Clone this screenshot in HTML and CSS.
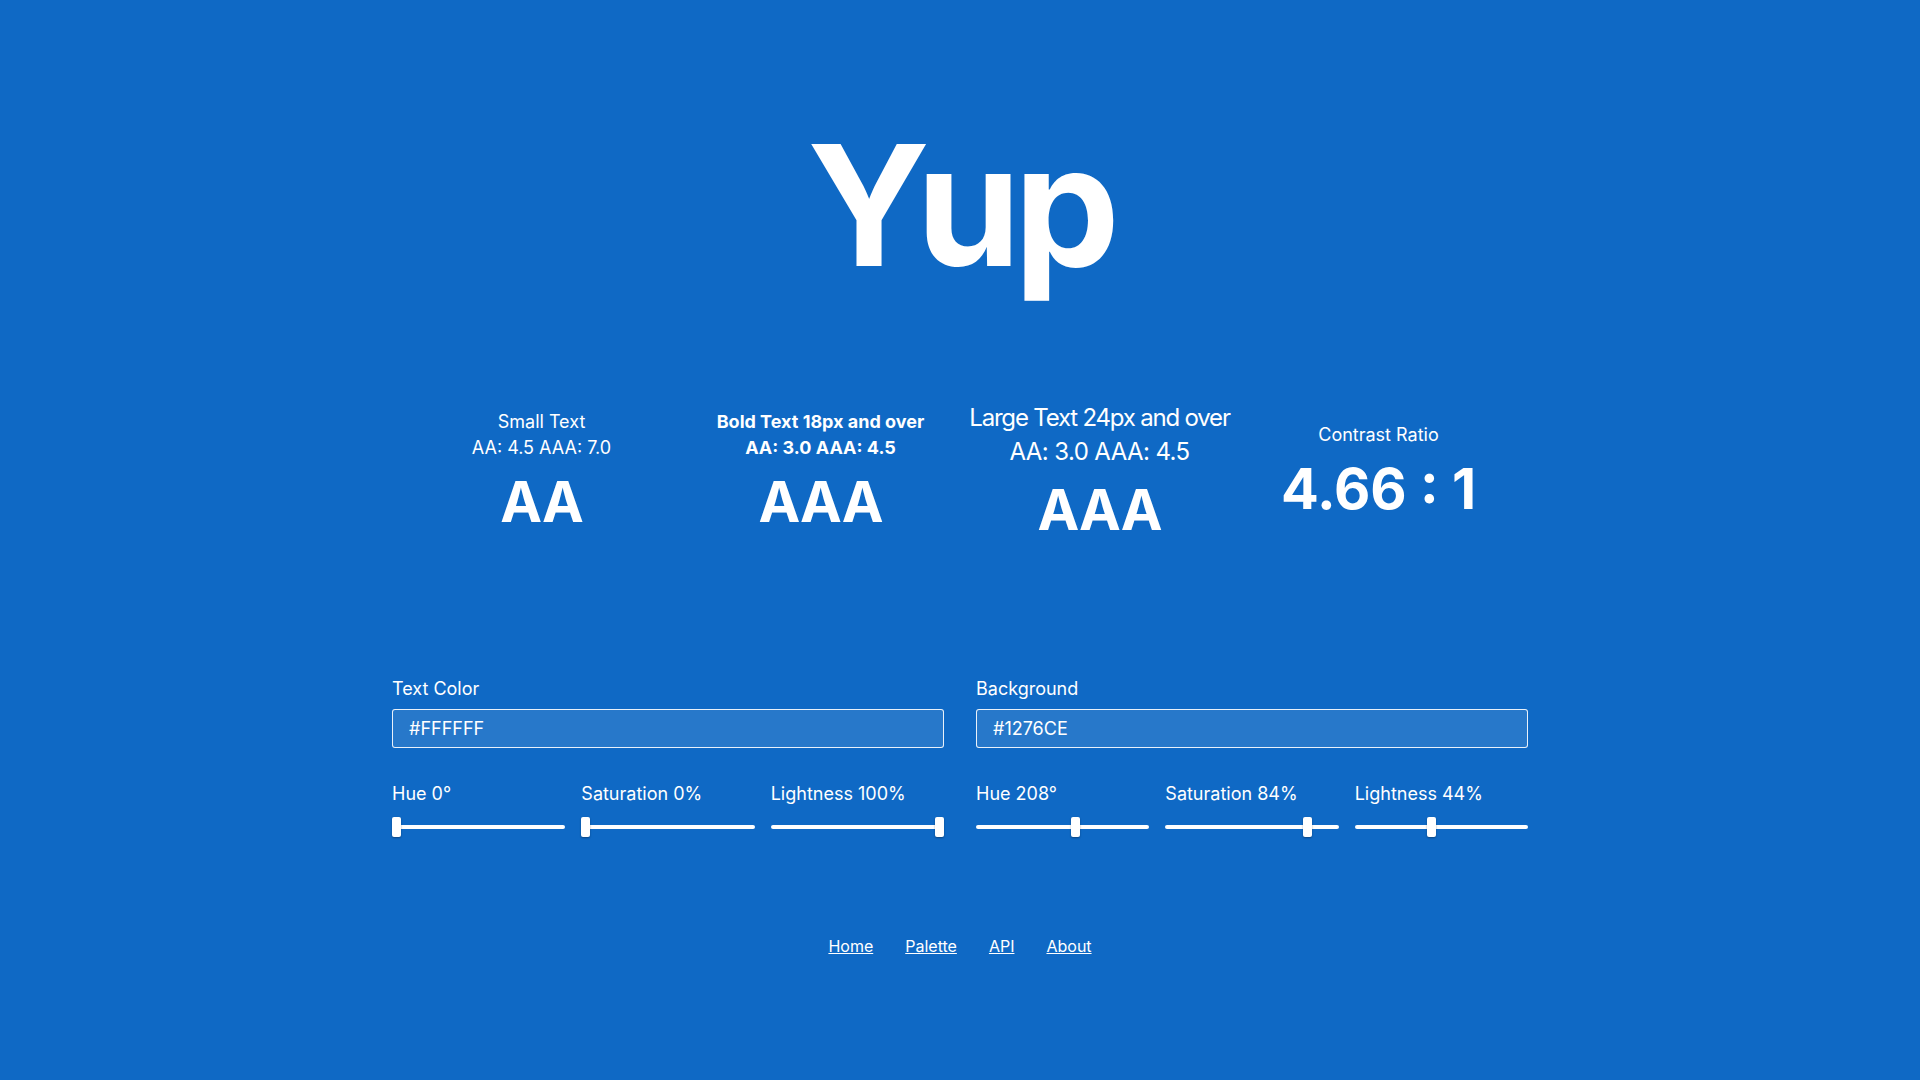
FILE: index.html
```html
<!DOCTYPE html>
<html lang="en">
<head>
<meta charset="utf-8">
<title>Yup</title>
<link rel="stylesheet" href="styles.css">
</head>
<body>
<main class="page">
  <h1 class="title">Yup</h1>

  <section class="stats">
    <div class="stat">
      <div class="stat-line">Small Text</div>
      <div class="stat-line">AA: 4.5 AAA: 7.0</div>
      <div class="stat-big">AA</div>
    </div>
    <div class="stat stat-bold">
      <div class="stat-line">Bold Text 18px and over</div>
      <div class="stat-line">AA: 3.0 AAA: 4.5</div>
      <div class="stat-big">AAA</div>
    </div>
    <div class="stat stat-large">
      <div class="stat-line stat-heading">Large Text 24px and over</div>
      <div class="stat-line">AA: 3.0 AAA: 4.5</div>
      <div class="stat-big">AAA</div>
    </div>
    <div class="stat">
      <div class="stat-line">Contrast Ratio</div>
      <div class="stat-big stat-ratio">4.66 : 1</div>
    </div>
  </section>

  <section class="controls">
    <div class="color-group">
      <label class="field-label" for="fg">Text Color</label>
      <input class="hex-input" id="fg" type="text" value="#FFFFFF">
      <div class="sliders">
        <div class="slider">
          <div class="slider-label">Hue 0°</div>
          <input class="range" type="range" min="0" max="360" value="0">
        </div>
        <div class="slider">
          <div class="slider-label">Saturation 0%</div>
          <input class="range" type="range" min="0" max="100" value="0">
        </div>
        <div class="slider">
          <div class="slider-label">Lightness 100%</div>
          <input class="range" type="range" min="0" max="100" value="100">
        </div>
      </div>
    </div>
    <div class="color-group">
      <label class="field-label" for="bg">Background</label>
      <input class="hex-input" id="bg" type="text" value="#1276CE">
      <div class="sliders">
        <div class="slider">
          <div class="slider-label">Hue 208°</div>
          <input class="range" type="range" min="0" max="360" value="208">
        </div>
        <div class="slider">
          <div class="slider-label">Saturation 84%</div>
          <input class="range" type="range" min="0" max="100" value="84">
        </div>
        <div class="slider">
          <div class="slider-label">Lightness 44%</div>
          <input class="range" type="range" min="0" max="100" value="44">
        </div>
      </div>
    </div>
  </section>

  <nav class="footer-nav">
    <a href="#">Home</a>
    <a href="#">Palette</a>
    <a href="#">API</a>
    <a href="#">About</a>
  </nav>
</main>
</body>
</html>
```

FILE: styles.css
```css
* {
  box-sizing: border-box;
}

html, body {
  margin: 0;
  padding: 0;
  height: 100%;
}

body {
  background: #0f69c5;
  color: #ffffff;
  font-family: Inter, "Noto Sans", "Liberation Sans", sans-serif;
  font-size: 18px;
}

.page {
  width: 1136px;
  margin: 0 auto;
  padding-top: 121px;
}

.title {
  margin: 0;
  font-size: 168px;
  line-height: 1;
  font-weight: 700;
  text-align: center;
  letter-spacing: -7px;
}

.stats {
  display: grid;
  grid-template-columns: repeat(4, minmax(0, 1fr));
  align-items: center;
  margin: 112px 10px 0;
}

.stat {
  display: flex;
  flex-direction: column;
  align-items: center;
  text-align: center;
}

.stat-line {
  font-size: 18px;
  line-height: 1.4;
  white-space: nowrap;
}

.stat-bold .stat-line {
  font-weight: 700;
}

.stat-large .stat-line {
  font-size: 24px;
  letter-spacing: -0.6px;
}

.stat-large .stat-heading {
  letter-spacing: -1.2px;
}

.stat-big {
  font-size: 56px;
  line-height: 1.5;
  font-weight: 700;
  letter-spacing: -1px;
  white-space: nowrap;
}

.stat-big.stat-ratio {
  letter-spacing: 0;
}

.controls {
  display: grid;
  grid-template-columns: 1fr 1fr;
  column-gap: 32px;
  margin-top: 124px;
}

.field-label {
  display: block;
  font-size: 18px;
  line-height: 1.4;
  margin-bottom: 8px;
}

.hex-input {
  display: block;
  width: 100%;
  height: 39px;
  padding: 0 16px;
  border: 1px solid rgba(255, 255, 255, 0.9);
  border-radius: 3px;
  background: rgba(255, 255, 255, 0.1);
  color: #ffffff;
  font-family: inherit;
  font-size: 18px;
  outline: none;
}

.sliders {
  display: grid;
  grid-template-columns: repeat(3, 1fr);
  column-gap: 16px;
  margin-top: 33px;
}

.slider-label {
  font-size: 18px;
  line-height: 1.4;
}

.range {
  -webkit-appearance: none;
  appearance: none;
  display: block;
  width: 100%;
  height: 20px;
  margin: 10px 0 0;
  padding: 0;
  background: transparent;
}

.range::-webkit-slider-runnable-track {
  height: 4px;
  background: #ffffff;
  border-radius: 2px;
}

.range::-webkit-slider-thumb {
  -webkit-appearance: none;
  appearance: none;
  width: 9px;
  height: 20px;
  margin-top: -8px;
  background: #ffffff;
  border-radius: 2px;
  box-shadow: 0 1px 2px rgba(0, 0, 0, 0.35);
}

.footer-nav {
  display: flex;
  justify-content: center;
  gap: 32px;
  margin-top: 97px;
  font-size: 16px;
  line-height: 1.5;
}

.footer-nav a {
  color: #ffffff;
  text-decoration: underline;
}
```
